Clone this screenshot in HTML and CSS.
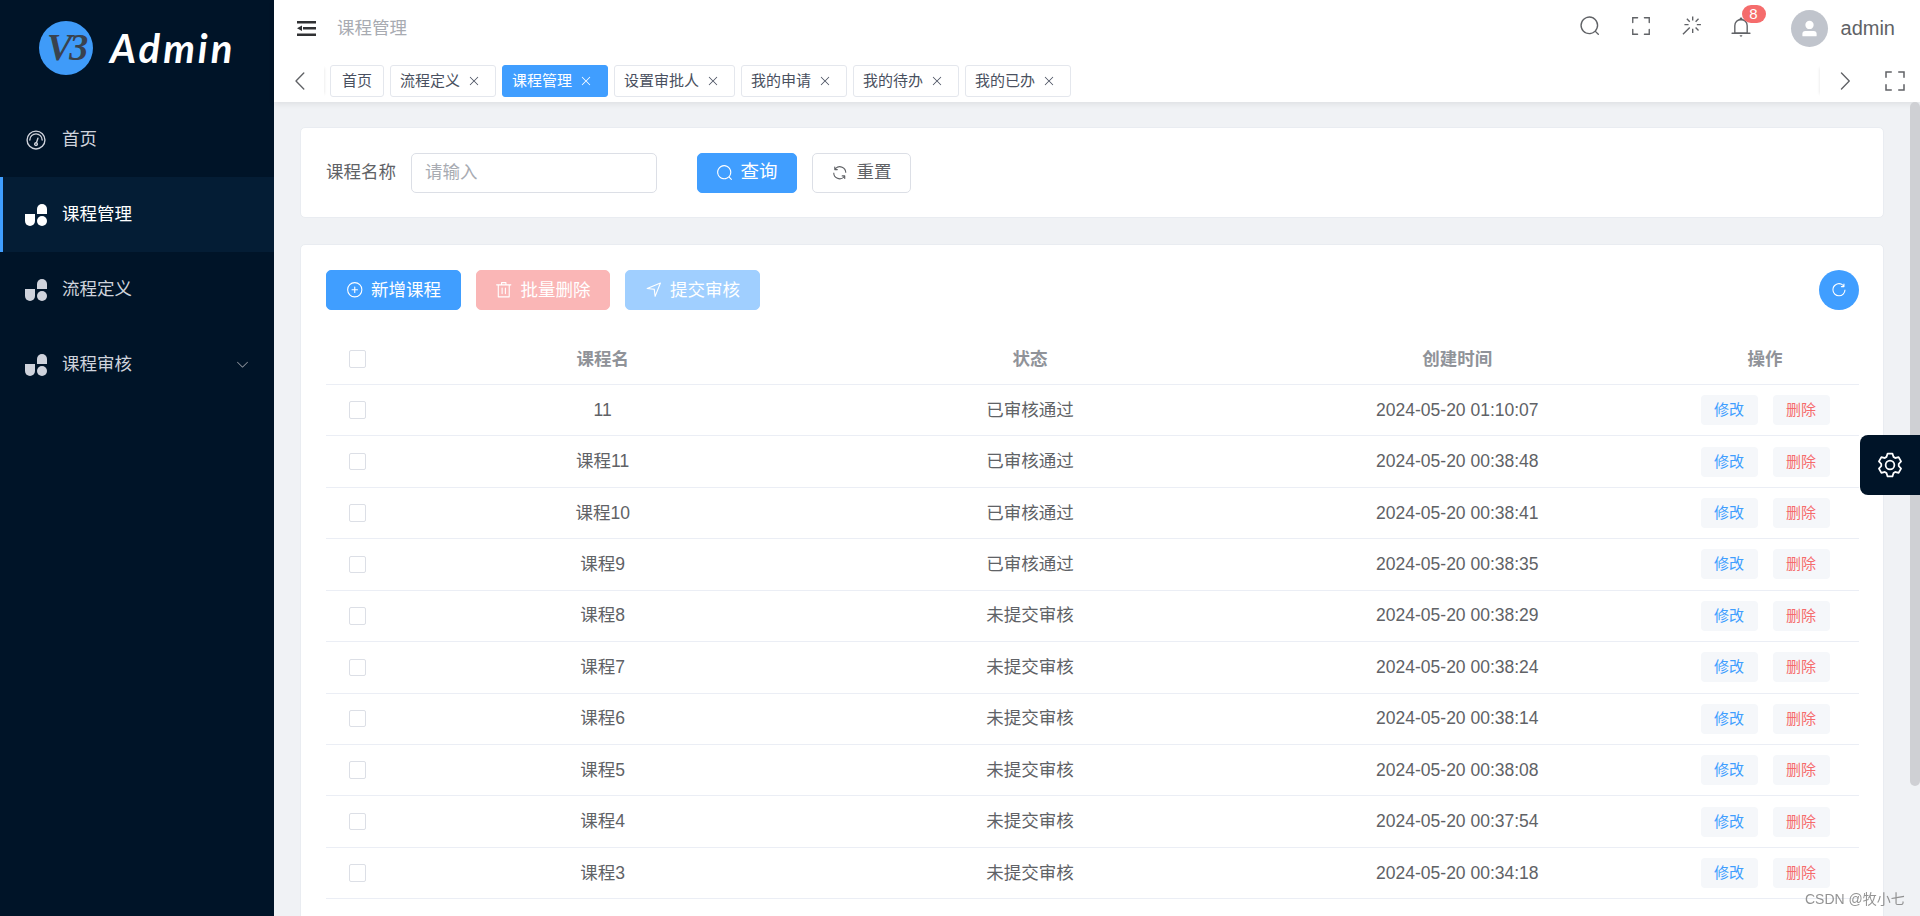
FILE: index.html
```html
<!DOCTYPE html>
<html lang="zh-CN">
<head>
  <meta charset="UTF-8" />
  <meta name="viewport" content="width=device-width, initial-scale=1" />
  <title>课程管理</title>
  <link rel="stylesheet" href="styles.css">
</head>
<body>
  <!-- icon sprite -->
  <svg class="sprite" aria-hidden="true">
    <symbol id="i-search" viewBox="0 0 1024 1024"><path d="m795.904 750.72 124.992 124.928a32 32 0 0 1-45.248 45.248L750.656 795.904a416 416 0 1 1 45.248-45.248zM480 832a352 352 0 1 0 0-704 352 352 0 0 0 0 704z"/></symbol>
    <symbol id="i-refresh" viewBox="0 0 1024 1024"><path d="M771.776 794.88A384 384 0 0 1 128 512h64a320 320 0 0 0 555.712 216.448H654.72a32 32 0 1 1 0-64h149.056a32 32 0 0 1 32 32v148.928a32 32 0 1 1-64 0v-50.56zM276.288 295.616h92.992a32 32 0 0 1 0 64H220.16a32 32 0 0 1-32-32V178.56a32 32 0 0 1 64 0v50.56A384 384 0 0 1 896.128 512h-64a320 320 0 0 0-555.776-216.384z"/></symbol>
    <symbol id="i-refresh-right" viewBox="0 0 1024 1024"><path d="M784.512 230.272v-50.56a32 32 0 1 1 64 0v149.056a32 32 0 0 1-32 32H667.52a32 32 0 1 1 0-64h92.992A320 320 0 1 0 524.8 833.152a320 320 0 0 0 320-320h64a384 384 0 0 1-384 384 384 384 0 0 1-384-384 384 384 0 0 1 643.712-282.88z"/></symbol>
    <symbol id="i-plus" viewBox="0 0 1024 1024"><path d="M352 480h320a32 32 0 1 1 0 64H352a32 32 0 0 1 0-64z"/><path d="M480 672V352a32 32 0 1 1 64 0v320a32 32 0 0 1-64 0z"/><path d="M512 896a384 384 0 1 0 0-768 384 384 0 0 0 0 768zm0 64a448 448 0 1 1 0-896 448 448 0 0 1 0 896z"/></symbol>
    <symbol id="i-delete" viewBox="0 0 1024 1024"><path d="M160 256H96a32 32 0 0 1 0-64h256V95.936a32 32 0 0 1 32-32h256a32 32 0 0 1 32 32V192h256a32 32 0 1 1 0 64h-64v672a32 32 0 0 1-32 32H192a32 32 0 0 1-32-32V256zm448-64v-64H416v64h192zM224 896h576V256H224v640zm192-128a32 32 0 0 1-32-32V416a32 32 0 0 1 64 0v320a32 32 0 0 1-32 32zm192 0a32 32 0 0 1-32-32V416a32 32 0 0 1 64 0v320a32 32 0 0 1-32 32z"/></symbol>
    <symbol id="i-position" viewBox="0 0 1024 1024"><path d="m249.6 417.088 319.744 43.072 39.168 310.272L845.12 178.88 249.6 417.088zm-129.024 47.168a32 32 0 0 1-7.68-61.44l777.792-311.04a32 32 0 0 1 41.6 41.6l-310.336 775.68a32 32 0 0 1-61.44-7.808L512 516.992l-391.424-52.736z"/></symbol>
    <symbol id="i-close" viewBox="0 0 1024 1024"><path d="M764.288 214.592 512 466.88 259.712 214.592a31.936 31.936 0 0 0-45.12 45.12L466.752 512 214.528 764.224a31.936 31.936 0 1 0 45.12 45.184L512 557.184l252.288 252.288a31.936 31.936 0 0 0 45.12-45.12L557.12 512.064l252.288-252.352a31.936 31.936 0 1 0-45.12-45.184z"/></symbol>
    <symbol id="i-left" viewBox="0 0 1024 1024"><path d="M609.408 149.376 277.76 489.6a32 32 0 0 0 0 44.672l331.648 340.352a29.12 29.12 0 0 0 41.728 0 30.592 30.592 0 0 0 0-42.752L339.264 511.936l311.872-319.872a30.592 30.592 0 0 0 0-42.688 29.12 29.12 0 0 0-41.728 0z"/></symbol>
    <symbol id="i-right" viewBox="0 0 1024 1024"><path d="M340.864 149.312a30.592 30.592 0 0 0 0 42.752L652.736 512 340.864 831.872a30.592 30.592 0 0 0 0 42.752 29.12 29.12 0 0 0 41.728 0L714.24 534.336a32 32 0 0 0 0-44.672L382.592 149.376a29.12 29.12 0 0 0-41.728 0z"/></symbol>
    <symbol id="i-down" viewBox="0 0 1024 1024"><path d="M831.872 340.864 512 652.672 192.128 340.864a30.592 30.592 0 0 0-42.688 0 29.12 29.12 0 0 0 0 41.6L489.6 714.24a32 32 0 0 0 44.8 0l340.16-331.776a29.12 29.12 0 0 0 0-41.6 30.592 30.592 0 0 0-42.688 0z"/></symbol>
    <symbol id="i-full" viewBox="0 0 1024 1024"><path d="m160 96.064 192 .192a32 32 0 0 1 0 64l-192-.192V352a32 32 0 0 1-64 0V96h64v.064zm0 831.872V928H96V672a32 32 0 1 1 64 0v191.936l192-.192a32 32 0 1 1 0 64l-192 .192zM864 96.064V96h64v256a32 32 0 1 1-64 0V160.064l-192 .192a32 32 0 1 1 0-64l192-.192zm0 831.872-192-.192a32 32 0 0 1 0-64l192 .192V672a32 32 0 1 1 64 0v256h-64v-.064z"/></symbol>
    <symbol id="i-bell" viewBox="0 0 1024 1024"><path d="M512 64a64 64 0 0 1 64 64v64H448v-64a64 64 0 0 1 64-64z"/><path d="M256 768h512V448a256 256 0 1 0-512 0v320zm256-640a320 320 0 0 1 320 320v384H192V448a320 320 0 0 1 320-320z"/><path d="M96 768h832q32 0 32 32t-32 32H96q-32 0-32-32t32-32zm352 128h128a64 64 0 0 1-128 0z"/></symbol>
    <symbol id="i-magic" viewBox="0 0 1024 1024"><path d="M512 64h64v192h-64V64zm0 576h64v192h-64V640zM160 480v-64h192v64H160zm576 0v-64h192v64H736zM249.856 199.04l45.248-45.184L430.848 289.6 385.6 334.848 249.856 199.104zM657.152 606.4l45.248-45.248 135.744 135.744-45.248 45.248L657.152 606.4zM114.048 923.2 68.8 877.952l316.8-316.8 45.248 45.248-316.8 316.8zM702.4 334.848 657.152 289.6l135.744-135.744 45.248 45.248L702.4 334.848z"/></symbol>
    <symbol id="i-user" viewBox="0 0 1024 1024"><path d="M288 320a224 224 0 1 0 448 0 224 224 0 1 0-448 0zm544 608H160a32 32 0 0 1-32-32v-96a160 160 0 0 1 160-160h448a160 160 0 0 1 160 160v96a32 32 0 0 1-32 32z"/></symbol>
    <symbol id="i-odometer" viewBox="0 0 1024 1024"><path d="M512 896a384 384 0 1 0 0-768 384 384 0 0 0 0 768zm0 64a448 448 0 1 1 0-896 448 448 0 0 1 0 896z"/><path d="M192 512a320 320 0 1 1 640 0 32 32 0 1 1-64 0 256 256 0 1 0-512 0 32 32 0 0 1-64 0z"/><path d="M570.432 627.84A96 96 0 1 1 509.568 608l60.992-187.776A32 32 0 1 1 631.424 440l-60.992 187.776zM502.08 734.464a32 32 0 1 0 19.84-60.928 32 32 0 0 0-19.84 60.928z"/></symbol>
    <symbol id="i-setting" viewBox="0 0 1024 1024"><path d="M600.704 64a32 32 0 0 1 30.464 22.208l35.2 109.376c14.784 7.232 28.928 15.36 42.432 24.512l112.384-24.192a32 32 0 0 1 34.432 15.36L944.32 364.8a32 32 0 0 1-4.032 37.504l-77.12 85.12a357.12 357.12 0 0 1 0 49.024l77.12 85.248a32 32 0 0 1 4.032 37.504l-88.704 153.6a32 32 0 0 1-34.432 15.296L708.8 803.904c-13.44 9.088-27.648 17.28-42.368 24.512l-35.264 109.376A32 32 0 0 1 600.704 960H423.296a32 32 0 0 1-30.464-22.208L357.696 828.48a351.616 351.616 0 0 1-42.56-24.64l-112.32 24.256a32 32 0 0 1-34.432-15.36L79.68 659.2a32 32 0 0 1 4.032-37.504l77.12-85.248a357.12 357.12 0 0 1 0-48.896l-77.12-85.248A32 32 0 0 1 79.68 364.8l88.704-153.6a32 32 0 0 1 34.432-15.296l112.32 24.256c13.568-9.152 27.776-17.408 42.56-24.64l35.2-109.312A32 32 0 0 1 423.232 64H600.64zm-23.424 64H446.72l-36.352 113.088-24.512 11.968a294.113 294.113 0 0 0-34.816 20.096l-22.656 15.36-116.224-25.088-65.28 113.152 79.68 88.192-1.92 27.136a293.12 293.12 0 0 0 0 40.192l1.92 27.136-79.808 88.192 65.344 113.152 116.224-25.024 22.656 15.296a294.113 294.113 0 0 0 34.816 20.096l24.512 11.968L446.72 896h130.688l36.48-113.152 24.448-11.904a288.282 288.282 0 0 0 34.752-20.096l22.592-15.296 116.288 25.024 65.28-113.152-79.744-88.192 1.92-27.136a293.12 293.12 0 0 0 0-40.256l-1.92-27.136 79.808-88.128-65.344-113.152-116.288 24.96-22.592-15.232a287.616 287.616 0 0 0-34.752-20.096l-24.448-11.904L577.344 128zM512 320a192 192 0 1 1 0 384 192 192 0 0 1 0-384zm0 64a128 128 0 1 0 0 256 128 128 0 0 0 0-256z"/></symbol>
    <symbol id="i-component" viewBox="0 0 22 22"><path d="M12 5a5 5 0 0 1 10 0v5H12z"/><circle cx="17" cy="17" r="5"/><path d="M0 10h10v7a5 5 0 0 1-10 0z"/></symbol>
  </svg>

  <div class="app">
    <aside class="sidebar">
      <div class="logo">
        <span class="logo-mark">V3</span>
        <span class="logo-text">Admin</span>
      </div>
      <ul class="menu">
        <li class="menu-item"><svg class="menu-icon"><use href="#i-odometer"/></svg>首页</li>
        <li class="menu-item active"><svg class="menu-icon"><use href="#i-component"/></svg>课程管理</li>
        <li class="menu-item"><svg class="menu-icon"><use href="#i-component"/></svg>流程定义</li>
        <li class="menu-item"><svg class="menu-icon"><use href="#i-component"/></svg>课程审核<svg class="menu-arrow"><use href="#i-down"/></svg></li>
      </ul>
    </aside>

    <main class="main">
      <header class="head">
        <div class="navbar">
          <svg class="fold" viewBox="0 0 19 15"><path d="M0 0h19v2.400H0zM6 6h13v2.600H6zM0 12.600h19V15H0zM0 7.300 5 4.500v5.600z"/></svg>
          <span class="crumb">课程管理</span>
          <div class="nav-tools">
            <svg class="nav-icon"><use href="#i-search"/></svg>
            <svg class="nav-icon"><use href="#i-full"/></svg>
            <svg class="nav-icon"><use href="#i-magic"/></svg>
            <span class="bell">
              <svg class="nav-icon"><use href="#i-bell"/></svg>
              <span class="badge">8</span>
            </span>
          </div>
          <div class="user">
            <span class="avatar"><svg><use href="#i-user"/></svg></span>
            <span>admin</span>
          </div>
        </div>
        <div class="tagbar">
          <span class="tag-btn left"><svg><use href="#i-left"/></svg></span>
          <div class="tags">
            <span class="tag">首页</span>
            <span class="tag closable">流程定义<svg class="tag-close"><use href="#i-close"/></svg></span>
            <span class="tag closable active">课程管理<svg class="tag-close"><use href="#i-close"/></svg></span>
            <span class="tag closable">设置审批人<svg class="tag-close"><use href="#i-close"/></svg></span>
            <span class="tag closable">我的申请<svg class="tag-close"><use href="#i-close"/></svg></span>
            <span class="tag closable">我的待办<svg class="tag-close"><use href="#i-close"/></svg></span>
            <span class="tag closable">我的已办<svg class="tag-close"><use href="#i-close"/></svg></span>
          </div>
          <span class="tag-btn right"><svg><use href="#i-right"/></svg></span>
          <span class="tag-btn full"><svg><use href="#i-full"/></svg></span>
        </div>
      </header>

      <div class="content">
        <section class="card search-card">
          <label class="field-label" for="courseName">课程名称</label>
          <input class="field-input" id="courseName" type="text" placeholder="请输入" />
          <button class="btn primary query"><svg><use href="#i-search"/></svg>查询</button>
          <button class="btn"><svg><use href="#i-refresh"/></svg>重置</button>
        </section>

        <section class="card table-card">
          <div class="toolbar">
            <button class="btn primary"><svg><use href="#i-plus"/></svg>新增课程</button>
            <button class="btn danger-off"><svg><use href="#i-delete"/></svg>批量删除</button>
            <button class="btn primary-off"><svg><use href="#i-position"/></svg>提交审核</button>
            <button class="circle-btn"><svg><use href="#i-refresh-right"/></svg></button>
          </div>
          <table class="table">
            <colgroup>
              <col class="col-check" /><col /><col /><col /><col class="col-ops" />
            </colgroup>
            <thead>
              <tr><th><span class="check"></span></th><th>课程名</th><th>状态</th><th>创建时间</th><th>操作</th></tr>
            </thead>
            <tbody>
              <tr><td><span class="check"></span></td><td>11</td><td>已审核通过</td><td>2024-05-20 01:10:07</td><td><button class="act edit">修改</button><button class="act del">删除</button></td></tr>
              <tr><td><span class="check"></span></td><td>课程11</td><td>已审核通过</td><td>2024-05-20 00:38:48</td><td><button class="act edit">修改</button><button class="act del">删除</button></td></tr>
              <tr><td><span class="check"></span></td><td>课程10</td><td>已审核通过</td><td>2024-05-20 00:38:41</td><td><button class="act edit">修改</button><button class="act del">删除</button></td></tr>
              <tr><td><span class="check"></span></td><td>课程9</td><td>已审核通过</td><td>2024-05-20 00:38:35</td><td><button class="act edit">修改</button><button class="act del">删除</button></td></tr>
              <tr><td><span class="check"></span></td><td>课程8</td><td>未提交审核</td><td>2024-05-20 00:38:29</td><td><button class="act edit">修改</button><button class="act del">删除</button></td></tr>
              <tr><td><span class="check"></span></td><td>课程7</td><td>未提交审核</td><td>2024-05-20 00:38:24</td><td><button class="act edit">修改</button><button class="act del">删除</button></td></tr>
              <tr><td><span class="check"></span></td><td>课程6</td><td>未提交审核</td><td>2024-05-20 00:38:14</td><td><button class="act edit">修改</button><button class="act del">删除</button></td></tr>
              <tr><td><span class="check"></span></td><td>课程5</td><td>未提交审核</td><td>2024-05-20 00:38:08</td><td><button class="act edit">修改</button><button class="act del">删除</button></td></tr>
              <tr><td><span class="check"></span></td><td>课程4</td><td>未提交审核</td><td>2024-05-20 00:37:54</td><td><button class="act edit">修改</button><button class="act del">删除</button></td></tr>
              <tr><td><span class="check"></span></td><td>课程3</td><td>未提交审核</td><td>2024-05-20 00:34:18</td><td><button class="act edit">修改</button><button class="act del">删除</button></td></tr>
            </tbody>
          </table>
        </section>
      </div>
    </main>
  </div>

  <div class="scroll-thumb"></div>
  <div class="settings"><svg><use href="#i-setting"/></svg></div>
  <div class="watermark">CSDN @牧小七</div>
</body>
</html>
```
FILE: styles.css
```css
:root {
  --sidebar-bg: #001428;
  --sidebar-active: #041d35;
  --primary: #409eff;
  --danger: #f56c6c;
  --text: #606266;
  --text-light: #909399;
  --border: #ebeef5;
  --input-border: #dcdfe6;
  --page-bg: #f0f2f5;
}

* {
  box-sizing: border-box;
}

html, body {
  height: 100%;
  margin: 0;
  overflow: hidden;
}

body {
  font-family: "Liberation Sans", "Noto Sans CJK SC", sans-serif;
  font-size: 17.5px;
  line-height: 1.2;
  color: var(--text);
  background: var(--page-bg);
}

svg {
  fill: currentColor;
  flex: none;
}

.sprite {
  display: none;
}

.app {
  display: flex;
  height: 100%;
}

/* Sidebar */
.sidebar {
  flex: 0 0 274px;
  background: var(--sidebar-bg);
  color: #cfd3dc;
}

.logo {
  height: 102px;
  display: flex;
  align-items: center;
  padding: 0 0 6px 39px;
  gap: 17px;
}

.logo-mark {
  width: 54px;
  height: 54px;
  border-radius: 50%;
  background: #3f9bf9;
  color: #39424e;
  display: flex;
  align-items: center;
  justify-content: center;
  font-family: "Liberation Serif", serif;
  font-style: italic;
  font-weight: 700;
  font-size: 38px;
  letter-spacing: -3px;
}

.logo-text {
  color: #fff;
  font-family: Lato, sans-serif;
  font-style: italic;
  font-weight: 700;
  font-size: 40px;
  letter-spacing: 3px;
}

.menu {
  list-style: none;
  margin: 0;
  padding: 0;
}

.menu-item {
  height: 75px;
  display: flex;
  align-items: center;
  padding-left: 25px;
  position: relative;
}

.menu-item.active {
  background: var(--sidebar-active);
  color: #fff;
  box-shadow: inset 3px 0 0 var(--primary);
}

.menu-icon {
  width: 22px;
  height: 22px;
  margin-right: 15px;
}

.menu-arrow {
  width: 15px;
  height: 15px;
  position: absolute;
  right: 24px;
  top: 30px;
  color: #8c929c;
}

/* Top bars */
.main {
  flex: 1;
  min-width: 0;
  display: flex;
  flex-direction: column;
}

.head {
  background: #fff;
  height: 102px;
  flex: none;
  box-shadow: 0 2px 6px rgba(0, 0, 0, 0.08);
  position: relative;
}

.navbar {
  height: 56px;
  display: flex;
  align-items: center;
  padding: 0 25px 0 23px;
}

.fold {
  width: 19px;
  height: 15px;
  color: #303133;
}

.crumb {
  margin-left: 21px;
  color: #a8abb2;
}

.nav-tools {
  margin-left: auto;
  display: flex;
  align-items: center;
  gap: 29px;
  padding-bottom: 4px;
}

.nav-icon {
  display: block;
  width: 22px;
  height: 22px;
  color: #606266;
}

.bell {
  position: relative;
  margin-left: -2px;
  top: 1px;
}

.badge {
  position: absolute;
  left: 12px;
  top: -11px;
  min-width: 24px;
  height: 18px;
  border-radius: 9px;
  background: #f56c6c;
  color: #fff;
  font-size: 15px;
  line-height: 18px;
  text-align: center;
}

.user {
  margin-left: 39px;
  display: flex;
  align-items: center;
  gap: 13px;
  font-size: 20px;
}

.avatar {
  width: 37px;
  height: 37px;
  border-radius: 50%;
  background: #c0c4cc;
  color: #fff;
  display: flex;
  align-items: center;
  justify-content: center;
}

.avatar svg {
  width: 19px;
  height: 19px;
}

.tagbar {
  height: 46px;
  display: flex;
  align-items: center;
  padding-top: 4px;
}

.tag-btn {
  display: flex;
  align-items: center;
  justify-content: center;
  height: 32px;
  color: #606266;
}

.tag-btn svg {
  width: 24px;
  height: 24px;
}

.tag-btn.left {
  width: 50px;
  padding-left: 3px;
  box-shadow: 3px 0 3px -3px rgba(0, 0, 0, 0.12);
}

.tag-btn.right {
  width: 50px;
  margin-left: auto;
  box-shadow: -3px 0 3px -3px rgba(0, 0, 0, 0.12);
}

.tag-btn.full {
  width: 50px;
}

.tags {
  display: flex;
  gap: 6px;
  padding-left: 6px;
}

.tag {
  height: 32px;
  display: inline-flex;
  align-items: center;
  padding: 0 11px;
  border: 1px solid #e4e7ed;
  border-radius: 3px;
  font-size: 15px;
  color: #495060;
}

.tag.closable {
  padding-left: 9px;
}

.tag.active {
  background: var(--primary);
  border-color: var(--primary);
  color: #fff;
}

.tag-close {
  width: 14px;
  height: 14px;
  margin-left: 7px;
  margin-right: 3px;
}

/* Content */
.content {
  flex: 1;
  min-height: 0;
  overflow: hidden;
  padding: 25px 36px 0 26px;
}

.card {
  background: #fff;
  border: 1px solid #e9ecf1;
  border-radius: 5px;
}

.search-card {
  height: 91px;
  display: flex;
  align-items: center;
  padding-left: 25px;
  margin-bottom: 26px;
}

.field-label {
  margin-right: 15px;
}

.field-input {
  width: 246px;
  height: 40px;
  padding: 0 13px;
  border: 1px solid var(--input-border);
  border-radius: 5px;
  font: inherit;
  color: var(--text);
  outline: none;
}

.field-input::placeholder {
  color: #a8abb2;
}

.btn {
  height: 40px;
  display: inline-flex;
  align-items: center;
  gap: 8px;
  padding: 0 18.5px;
  border: 1px solid var(--input-border);
  border-radius: 5px;
  background: #fff;
  color: var(--text);
  font: inherit;
}

.btn svg {
  width: 17.5px;
  height: 17.5px;
}

.btn + .btn {
  margin-left: 15px;
}

.btn.query {
  margin-left: 40px;
  padding: 0 18px;
  gap: 7px;
  font-size: 18.5px;
}

.btn.primary {
  background: var(--primary);
  border-color: var(--primary);
  color: #fff;
}

.btn.danger-off {
  background: #fab6b6;
  border-color: #fab6b6;
  color: #fff;
}

.btn.primary-off {
  background: #a0cfff;
  border-color: #a0cfff;
  color: #fff;
}

.table-card {
  padding: 25px 24px 0 25px;
  height: 800px;
}

.toolbar {
  display: flex;
  align-items: center;
  margin-bottom: 24px;
}

.circle-btn {
  margin-left: auto;
  width: 40px;
  height: 40px;
  padding: 0;
  border: none;
  border-radius: 50%;
  background: var(--primary);
  color: #fff;
  display: flex;
  align-items: center;
  justify-content: center;
}

.circle-btn svg {
  width: 17.5px;
  height: 17.5px;
}

/* Table */
.table {
  width: 100%;
  border-collapse: collapse;
  table-layout: fixed;
}

.col-check {
  width: 63px;
}

.col-ops {
  width: 188px;
}

.table th,
.table td {
  padding: 0;
  text-align: center;
  border-bottom: 1px solid var(--border);
  font-weight: 400;
}

.table th {
  height: 50.5px;
  color: var(--text-light);
  font-weight: 700;
}

.table td {
  height: 51.43px;
}

.check {
  display: block;
  width: 17.5px;
  height: 17.5px;
  margin: 0 auto;
  border: 1px solid var(--input-border);
  border-radius: 2px;
  background: #fff;
}

.act {
  width: 57px;
  height: 30px;
  padding: 0;
  border: none;
  border-radius: 4px;
  background: #f5f7fa;
  font: inherit;
  font-size: 15px;
}

.act + .act {
  margin-left: 15px;
}

.act.edit {
  color: var(--primary);
}

.act.del {
  color: var(--danger);
}

/* Floating bits */
.scroll-thumb {
  position: fixed;
  top: 102px;
  right: 0;
  width: 10px;
  height: 684px;
  border-radius: 5px;
  background: #cfd0d4;
}

.settings {
  position: fixed;
  top: 435px;
  right: 0;
  width: 60px;
  height: 60px;
  border-radius: 8px 0 0 8px;
  background: var(--sidebar-bg);
  color: #fff;
  display: flex;
  align-items: center;
  justify-content: center;
}

.settings svg {
  width: 28px;
  height: 28px;
}

.watermark {
  position: fixed;
  left: 1805px;
  bottom: 8px;
  font-size: 14px;
  color: rgba(120, 120, 120, 0.8);
}
```
